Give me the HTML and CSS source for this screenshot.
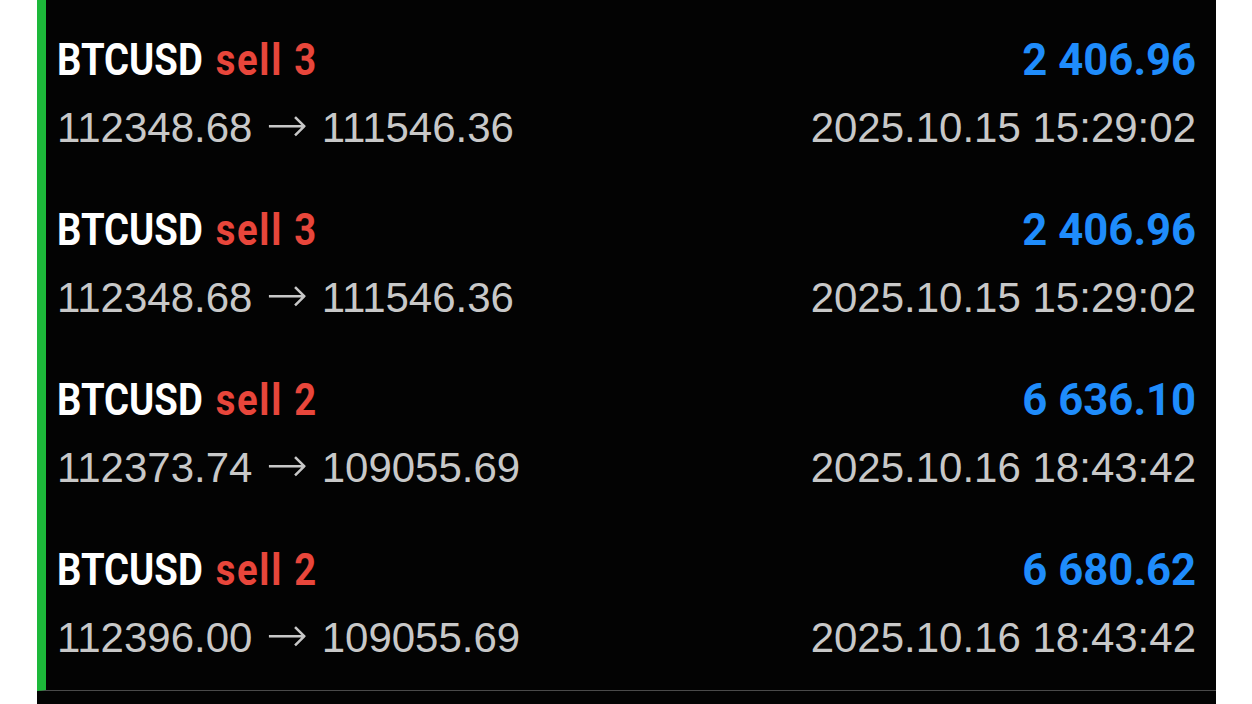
FILE: index.html
```html
<!DOCTYPE html>
<html>
<head>
<meta charset="utf-8">
<link rel="stylesheet" href="styles.css">
</head>
<body>
<div class="panel">
  <ul class="deals">
    <li class="deal">
      <div class="line top">
        <span class="title">BTCUSD <span class="side">sell 3</span></span>
        <span class="profit">2 406.96</span>
      </div>
      <div class="line sub">
        <span>112348.68 <span class="arrow">→</span> 111546.36</span>
        <span>2025.10.15 15:29:02</span>
      </div>
    </li>
    <li class="deal">
      <div class="line top">
        <span class="title">BTCUSD <span class="side">sell 3</span></span>
        <span class="profit">2 406.96</span>
      </div>
      <div class="line sub">
        <span>112348.68 <span class="arrow">→</span> 111546.36</span>
        <span>2025.10.15 15:29:02</span>
      </div>
    </li>
    <li class="deal">
      <div class="line top">
        <span class="title">BTCUSD <span class="side">sell 2</span></span>
        <span class="profit">6 636.10</span>
      </div>
      <div class="line sub">
        <span>112373.74 <span class="arrow">→</span> 109055.69</span>
        <span>2025.10.16 18:43:42</span>
      </div>
    </li>
    <li class="deal">
      <div class="line top">
        <span class="title">BTCUSD <span class="side">sell 2</span></span>
        <span class="profit">6 680.62</span>
      </div>
      <div class="line sub">
        <span>112396.00 <span class="arrow">→</span> 109055.69</span>
        <span>2025.10.16 18:43:42</span>
      </div>
    </li>
  </ul>
</div>
</body>
</html>
```
FILE: styles.css
```css
html, body {
  margin: 0;
  padding: 0;
  background: #ffffff;
  height: 100%;
  overflow: hidden;
}
.panel {
  margin-left: 37px;
  width: 1179px;
  height: 704px;
  background: #030303;
}
.deals {
  list-style: none;
  margin: 0;
  padding: 10px 0 0 0;
  border-left: 9px solid #1db83a;
  border-bottom: 1px solid #4a4a4a;
}
.deal {
  padding: 26px 20px 28px 11px;
  height: 116px;
}
.line {
  display: flex;
  justify-content: space-between;
  align-items: baseline;
}
.top {
  font-family: Roboto, "Liberation Sans", sans-serif;
  font-weight: 700;
  font-size: 45px;
  line-height: 48px;
}
.title {
  display: inline-block;
  color: #ffffff;
  transform: scaleX(0.85);
  transform-origin: left center;
}
.side {
  color: #e8463b;
  letter-spacing: 2px;
  margin-left: 4px;
}
.profit {
  display: inline-block;
  color: #1f8cfb;
  transform: scaleX(0.97);
  transform-origin: right center;
}
.sub {
  margin-top: 20px;
  font-family: "Liberation Sans", Arial, sans-serif;
  font-size: 42px;
  line-height: 48px;
  color: #c8c8c8;
}
.arrow {
  font-family: "DejaVu Sans ExtraLight", "DejaVu Sans", sans-serif;
  font-weight: 200;
  font-size: 50px;
  line-height: 1px;
  margin: 0 2px;
}
```
